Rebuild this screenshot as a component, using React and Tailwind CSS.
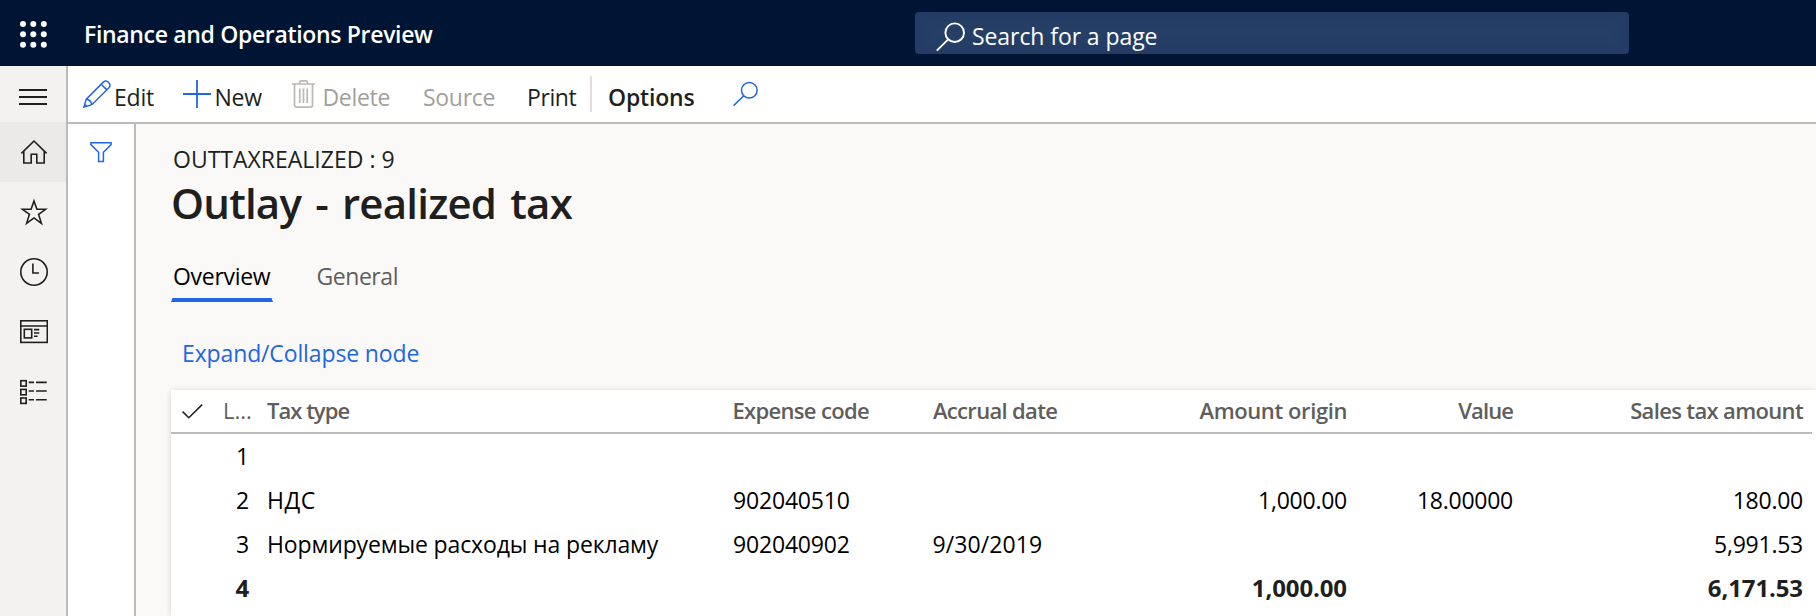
import React from 'react';

const navStroke = { fill: 'none', stroke: '#201f1e', strokeWidth: 1.6 };
const blue = { fill: 'none', stroke: '#2266e3', strokeWidth: 1.5 };

function Waffle() {
  const p = [4, 14.3, 24.8];
  return (
    <svg width="30" height="30" viewBox="0 0 30 30" className="shrink-0" fill="#fff">
      {p.map((y) => p.map((x) => <circle key={`${x}-${y}`} cx={x} cy={y} r="3" />))}
    </svg>
  );
}

const navIcons = [
  <path key="home" d="M1.4 15.4 14 3l12.6 12.4M3.8 13.4V25h7.4v-8.8h5.6V25h7.4V13.4" />,
  <path key="star" d="M14 3 16.9 11.3H25.6L18.6 16.4 21.4 25.3 14 19.9 6.6 25.3 9.4 16.4 2.4 11.3H11.1Z" />,
  <g key="clock">
    <circle cx="14" cy="14" r="13.2" />
    <path d="M12.9 5.5V15H19" />
  </g>,
  <g key="news">
    <rect x="0.8" y="2.8" width="26.5" height="21.6" />
    <path d="M1 8H27M14 11.6h5.3M14 15h5.3M14 18.3h3.6" />
    <rect x="4.3" y="11.3" width="7.4" height="8.6" />
  </g>,
  <g key="list">
    <rect x="0.8" y="2.7" width="5.4" height="5.4" />
    <rect x="0.8" y="11.4" width="5.4" height="5.4" />
    <rect x="0.8" y="20" width="5.4" height="5.4" />
    <path d="M8.7 4.4h5.3M16 4.4h10.7M8.7 13h5.3M16 13h10.7M8.7 21.8h5.3M16 21.8h10.7" />
  </g>,
];

function SideNav() {
  return (
    <nav className="w-[68px] shrink-0 bg-[#f3f2f1] border-r-2 border-[#bdbbb9]">
      <div className="h-14 pl-[19px] pt-[23px]">
        <svg width="28" height="18" viewBox="0 0 28 18" stroke="#201f1e" strokeWidth="2">
          <path d="M0 1H28M0 8H28M0 15H28" />
        </svg>
      </div>
      {navIcons.map((icon, i) => (
        <div key={i} className={`h-[60px] flex items-center pl-5 ${i === 0 ? 'bg-[#eceae8]' : ''}`}>
          <svg width="28" height="28" viewBox="0 0 28 28" {...navStroke}>{icon}</svg>
        </div>
      ))}
    </nav>
  );
}

function Toolbar() {
  return (
    <div className="h-[58px] flex items-start bg-white border-b-2 border-[#bdbbb9] pl-[15px] text-[23px] leading-[28px] text-[#201f1e]">
      <div className="w-[100px] flex">
        <svg width="28" height="28" viewBox="0 0 28 28" className="mt-[14px] shrink-0" {...blue}>
          <path d="M.9 27.1 3.3 19.1 20.3 2.1Q22.8-.2 25.6 2.4 28.2 5.1 25.9 7.7L8.9 24.7ZM18.2 4.3 23.8 9.9M3.3 19.1Q7.9 20.1 8.9 24.7M1.8 24.2 3.9 26.2" />
        </svg>
        <span className="mt-[17px] ml-[3px] tracking-[-0.2px]">Edit</span>
      </div>
      <div className="w-[109px] flex">
        <svg width="28" height="28" viewBox="0 0 28 28" className="mt-[14px] shrink-0" {...blue} strokeWidth="1.8">
          <path d="M0 14H28M14 0V28" />
        </svg>
        <span className="mt-[17px] ml-[3.5px] tracking-[-0.2px]">New</span>
      </div>
      <div className="w-[130px] flex text-[#a19f9d]">
        <svg width="23" height="28" viewBox="0 0 23 28" className="mt-[14px] shrink-0" fill="none" stroke="#bdb8b5" strokeWidth="1.7">
          <path d="M0 4H23M7.6 4V2.6Q7.6.9 9.2.9h4.6Q15.4.9 15.4 2.6V4M2.5 4V25Q2.5 27.1 4.6 27.1H18.4Q20.5 27.1 20.5 25V4M7.8 8.6V23M11.5 8.6V23M15.2 8.6V23" />
        </svg>
        <span className="mt-[17px] ml-[7.5px] tracking-[-0.32px]">Delete</span>
      </div>
      <span className="w-[105px] pl-px mt-[17px] text-[#a19f9d] tracking-[-0.3px]">Source</span>
      <span className="w-[63px] mt-[17px] tracking-[-0.4px]">Print</span>
      <span className="w-0.5 h-9 mt-[10px] bg-[#e1dfdd]" />
      <span className="w-[125px] mt-[17px] ml-4 font-semibold tracking-[-0.2px]">Options</span>
      <svg width="26" height="26" viewBox="0 0 26 26" className="mt-[15px]" {...blue}>
        <path d="M.6 24.6 10.8 14.7" />
        <circle cx="16.3" cy="9.3" r="7.8" />
      </svg>
    </div>
  );
}

const cols = 'grid grid-cols-[52px_44px_465px_200px_216px_199px_166px_290px]';

const rows = [
  { n: '1' },
  { n: '2', type: 'НДС', code: '902040510', origin: '1,000.00', value: '18.00000', amount: '180.00' },
  { n: '3', type: 'Нормируемые расходы на рекламу', code: '902040902', date: '9/30/2019', amount: '5,991.53' },
  { n: '4', origin: '1,000.00', amount: '6,171.53', total: true },
];

function Grid() {
  return (
    <div className="mt-[21px] flex-1 bg-white shadow-[0_1px_6px_rgba(0,0,0,0.16)]">
      <div className={`${cols} h-11 w-[1641px] border-b-2 border-[#bdbbb9] text-[22px] leading-[41px] font-[560] text-[#605e5c] whitespace-nowrap`}>
        <svg width="21" height="15" viewBox="0 0 21 15" className="mt-[14px] ml-[10.5px]" fill="none" stroke="#201f1e" strokeWidth="1.5">
          <path d="M.6 7.6 6.8 13.8 20.2.6" />
        </svg>
        <span className="font-medium">L...</span>
        <span className="tracking-[-0.97px]">Tax type</span>
        <span className="tracking-[-0.68px] pl-[0.5px]">Expense code</span>
        <span className="tracking-[-0.68px] pl-px">Accrual date</span>
        <span className="tracking-[-0.4px] text-right">Amount origin</span>
        <span className="tracking-[-0.9px] text-right">Value</span>
        <span className="tracking-[-0.65px] text-right">Sales tax amount</span>
      </div>
      {rows.map((r) => (
        <div
          key={r.n}
          className={`${cols} h-11 leading-[44px] whitespace-nowrap ${r.total ? 'text-[24px] font-bold text-[#201f1e] tracking-[-0.1px]' : 'text-[23px] text-black tracking-[-0.25px]'}`}
        >
          <span />
          <span className="text-right pr-[18px]">{r.n}</span>
          <span className={r.type === 'НДС' ? 'tracking-[0.5px]' : 'tracking-[-0.14px]'}>{r.type}</span>
          <span className="tracking-[-0.18px] pl-px">{r.code}</span>
          <span className="tracking-[0.1px] pl-[0.5px]">{r.date}</span>
          <span className="text-right">{r.origin}</span>
          <span className="text-right">{r.value}</span>
          <span className="text-right">{r.amount}</span>
        </div>
      ))}
    </div>
  );
}

export default function App() {
  return (
    <div className="w-[1816px] h-[616px] overflow-hidden flex flex-col font-['Open_Sans','Noto_Sans',sans-serif] text-[#201f1e]">
      <header className="h-[66px] shrink-0 flex items-start bg-[#001433] text-white">
        <div className="w-[84px] pl-[19px] pt-[20px]">
          <Waffle />
        </div>
        <div className="w-[831px] pt-[18px] text-[23px] leading-[32px] font-semibold tracking-[-0.33px]">
          Finance and Operations Preview
        </div>
        <div className="mt-3 w-[714px] h-[42px] rounded-[4px] bg-[#263f66] shadow-[inset_0_0_14px_rgba(34,56,102,0.8)] flex pl-[21px]">
          <svg width="30" height="30" viewBox="0 0 30 30" className="mt-[10px]" fill="none" stroke="#fff" strokeWidth="1.9">
            <path d="M.8 28.6 12.2 17.4" />
            <circle cx="18.7" cy="10.7" r="9.3" />
          </svg>
          <span className="ml-[6px] mt-[3px] text-[23px] leading-[42px] tracking-[-0.08px]">Search for a page</span>
        </div>
      </header>
      <div className="flex flex-1 min-h-0">
        <SideNav />
        <div className="flex-1 min-w-0 flex flex-col">
          <Toolbar />
          <div className="flex flex-1 min-h-0">
            <aside className="w-[68px] shrink-0 bg-white border-r-2 border-[#bdbbb9] pl-[22px] pt-[18px]">
              <svg width="22" height="21" viewBox="0 0 22 21" {...blue}>
                <path d="M.9.8H21.1V2.6L13.4 10.2V19.4H8.6V10.2L.9 2.6Z" />
              </svg>
            </aside>
            <main className="flex-1 min-w-0 flex flex-col bg-[#faf9f8] pl-[35px] pt-[19px]">
              <div className="pl-[2px] text-[23px] leading-[32px]">OUTTAXREALIZED : 9</div>
              <h1 className="text-[42px] leading-[56px] font-[560] tracking-[-0.8px] [word-spacing:4px]">Outlay - realized tax</h1>
              <div className="mt-[29px] flex text-[23px] leading-[32px]">
                <div className="w-[102px] pl-0.5">
                  <div className="text-black tracking-[-0.3px]">Overview</div>
                </div>
                <div className="ml-[43.5px] text-[#605e5c] tracking-[-0.45px]">General</div>
              </div>
              <svg width="102" height="4" viewBox="0 0 102 4" className="mt-[6px] shrink-0">
                <path d="M1.5 0H100.5L102 4H0Z" fill="#2266e3" />
              </svg>
              <div className="mt-[35px] pl-[11px] text-[23px] leading-[32px] text-[#2266e3] tracking-[-0.13px]">Expand/Collapse node</div>
              <Grid />
            </main>
          </div>
        </div>
      </div>
    </div>
  );
}
